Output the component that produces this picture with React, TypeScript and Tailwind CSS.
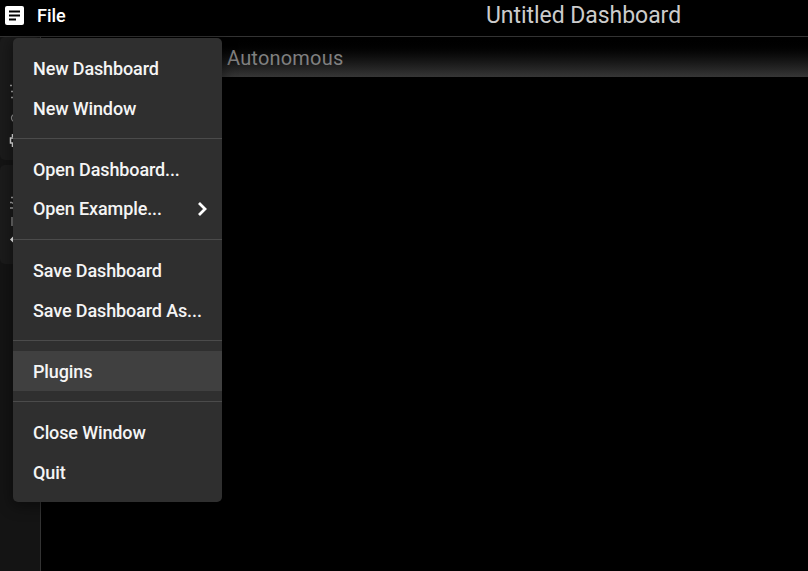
const groups = [
  ["New Dashboard", "New Window"],
  ["Open Dashboard...", "Open Example..."],
  ["Save Dashboard", "Save Dashboard As..."],
  ["Plugins"],
  ["Close Window", "Quit"],
];

function FileMenu() {
  return (
    <div className="absolute left-[13px] top-[38px] w-[209px] rounded-[5px] bg-[#2f2f2f] py-[10px] shadow-[0_3px_14px_2px_rgba(0,0,0,0.4)]">
      {groups.map((items, i) => (
        <div key={i}>
          {i > 0 && <div className="my-[10px] h-px bg-[#4b4b4b]" />}
          {items.map((label) => (
            <div
              key={label}
              className={
                "flex h-10 items-center justify-between pl-5 pr-[15px] text-[18px] font-medium tracking-[-0.12px] text-[#f5f5f5] " +
                (label === "Plugins" ? "bg-[#404040]" : "")
              }
            >
              <span className={"whitespace-nowrap " + (label === "Open Example..." ? "pb-[2px]" : "")}>{label}</span>
              {label === "Open Example..." && (
                <svg width="10" height="16" viewBox="0 0 10 16" fill="none" stroke="#fff" strokeWidth="2.8">
                  <path d="M2 2 L8 8 L2 14" />
                </svg>
              )}
            </div>
          ))}
        </div>
      ))}
    </div>
  );
}

export default function App() {
  return (
    <div className="relative flex h-[571px] w-[808px] flex-col overflow-hidden bg-black font-[Roboto,sans-serif]">
      <header className="flex h-[37px] shrink-0 border-b border-[#333]">
        <div className="flex h-[31px] w-[486px] items-center pl-[5px]">
          <svg width="19" height="19" viewBox="0 0 19 19">
            <rect width="19" height="19" rx="2" fill="#fff" />
            <path d="M4 5.5h11M4 9.5h11M4 13.5h7" stroke="#000" strokeWidth="2" />
          </svg>
          <span className="ml-[13px] text-[18px] font-medium text-white">File</span>
        </div>
        <h1 className="h-[31px] whitespace-nowrap text-[23px] leading-[31px] tracking-[-0.05px] text-[#ccc]">
          Untitled Dashboard
        </h1>
      </header>
      <div className="flex min-h-0 flex-1">
        <aside className="w-[41px] shrink-0 border-r border-[#333] bg-[#141414]">
          <div className="h-[123px] rounded-[5px] bg-[#1b1b1b] pl-[9px]">
            <svg className="block" width="8" height="123" viewBox="9 37 8 123">
              <path d="M10 85.5h2M11 91.5h3M11 97.5h3" stroke="#aaa" strokeWidth="1.3" />
              <circle cx="15" cy="118" r="3.5" fill="none" stroke="#999" strokeWidth="1.3" />
              <path d="M12.5 134v3M12.5 143v4M14 138h-3.5v5h3.5" fill="none" stroke="#eee" strokeWidth="1.5" />
            </svg>
          </div>
          <div className="mt-[5px] h-[99px] rounded-[5px] bg-[#1b1b1b] pl-[9px]">
            <svg className="block" width="8" height="99" viewBox="9 165 8 99">
              <path d="M11 197.5h3M10 202.5h2M12 203h3M10 208h3" stroke="#aaa" strokeWidth="1.3" />
              <path d="M12 217v9" stroke="#888" strokeWidth="1.5" />
              <path d="M10 239.5l5-5v10z" fill="#fff" />
            </svg>
          </div>
        </aside>
        <main className="min-w-0 flex-1">
          <div className="flex h-10 items-center bg-linear-to-b from-black to-[#363636] pb-px pl-[186px] pt-[2px] text-[20px] tracking-[0.2px] text-[#808080]">
            Autonomous
          </div>
        </main>
      </div>
      <FileMenu />
    </div>
  );
}
